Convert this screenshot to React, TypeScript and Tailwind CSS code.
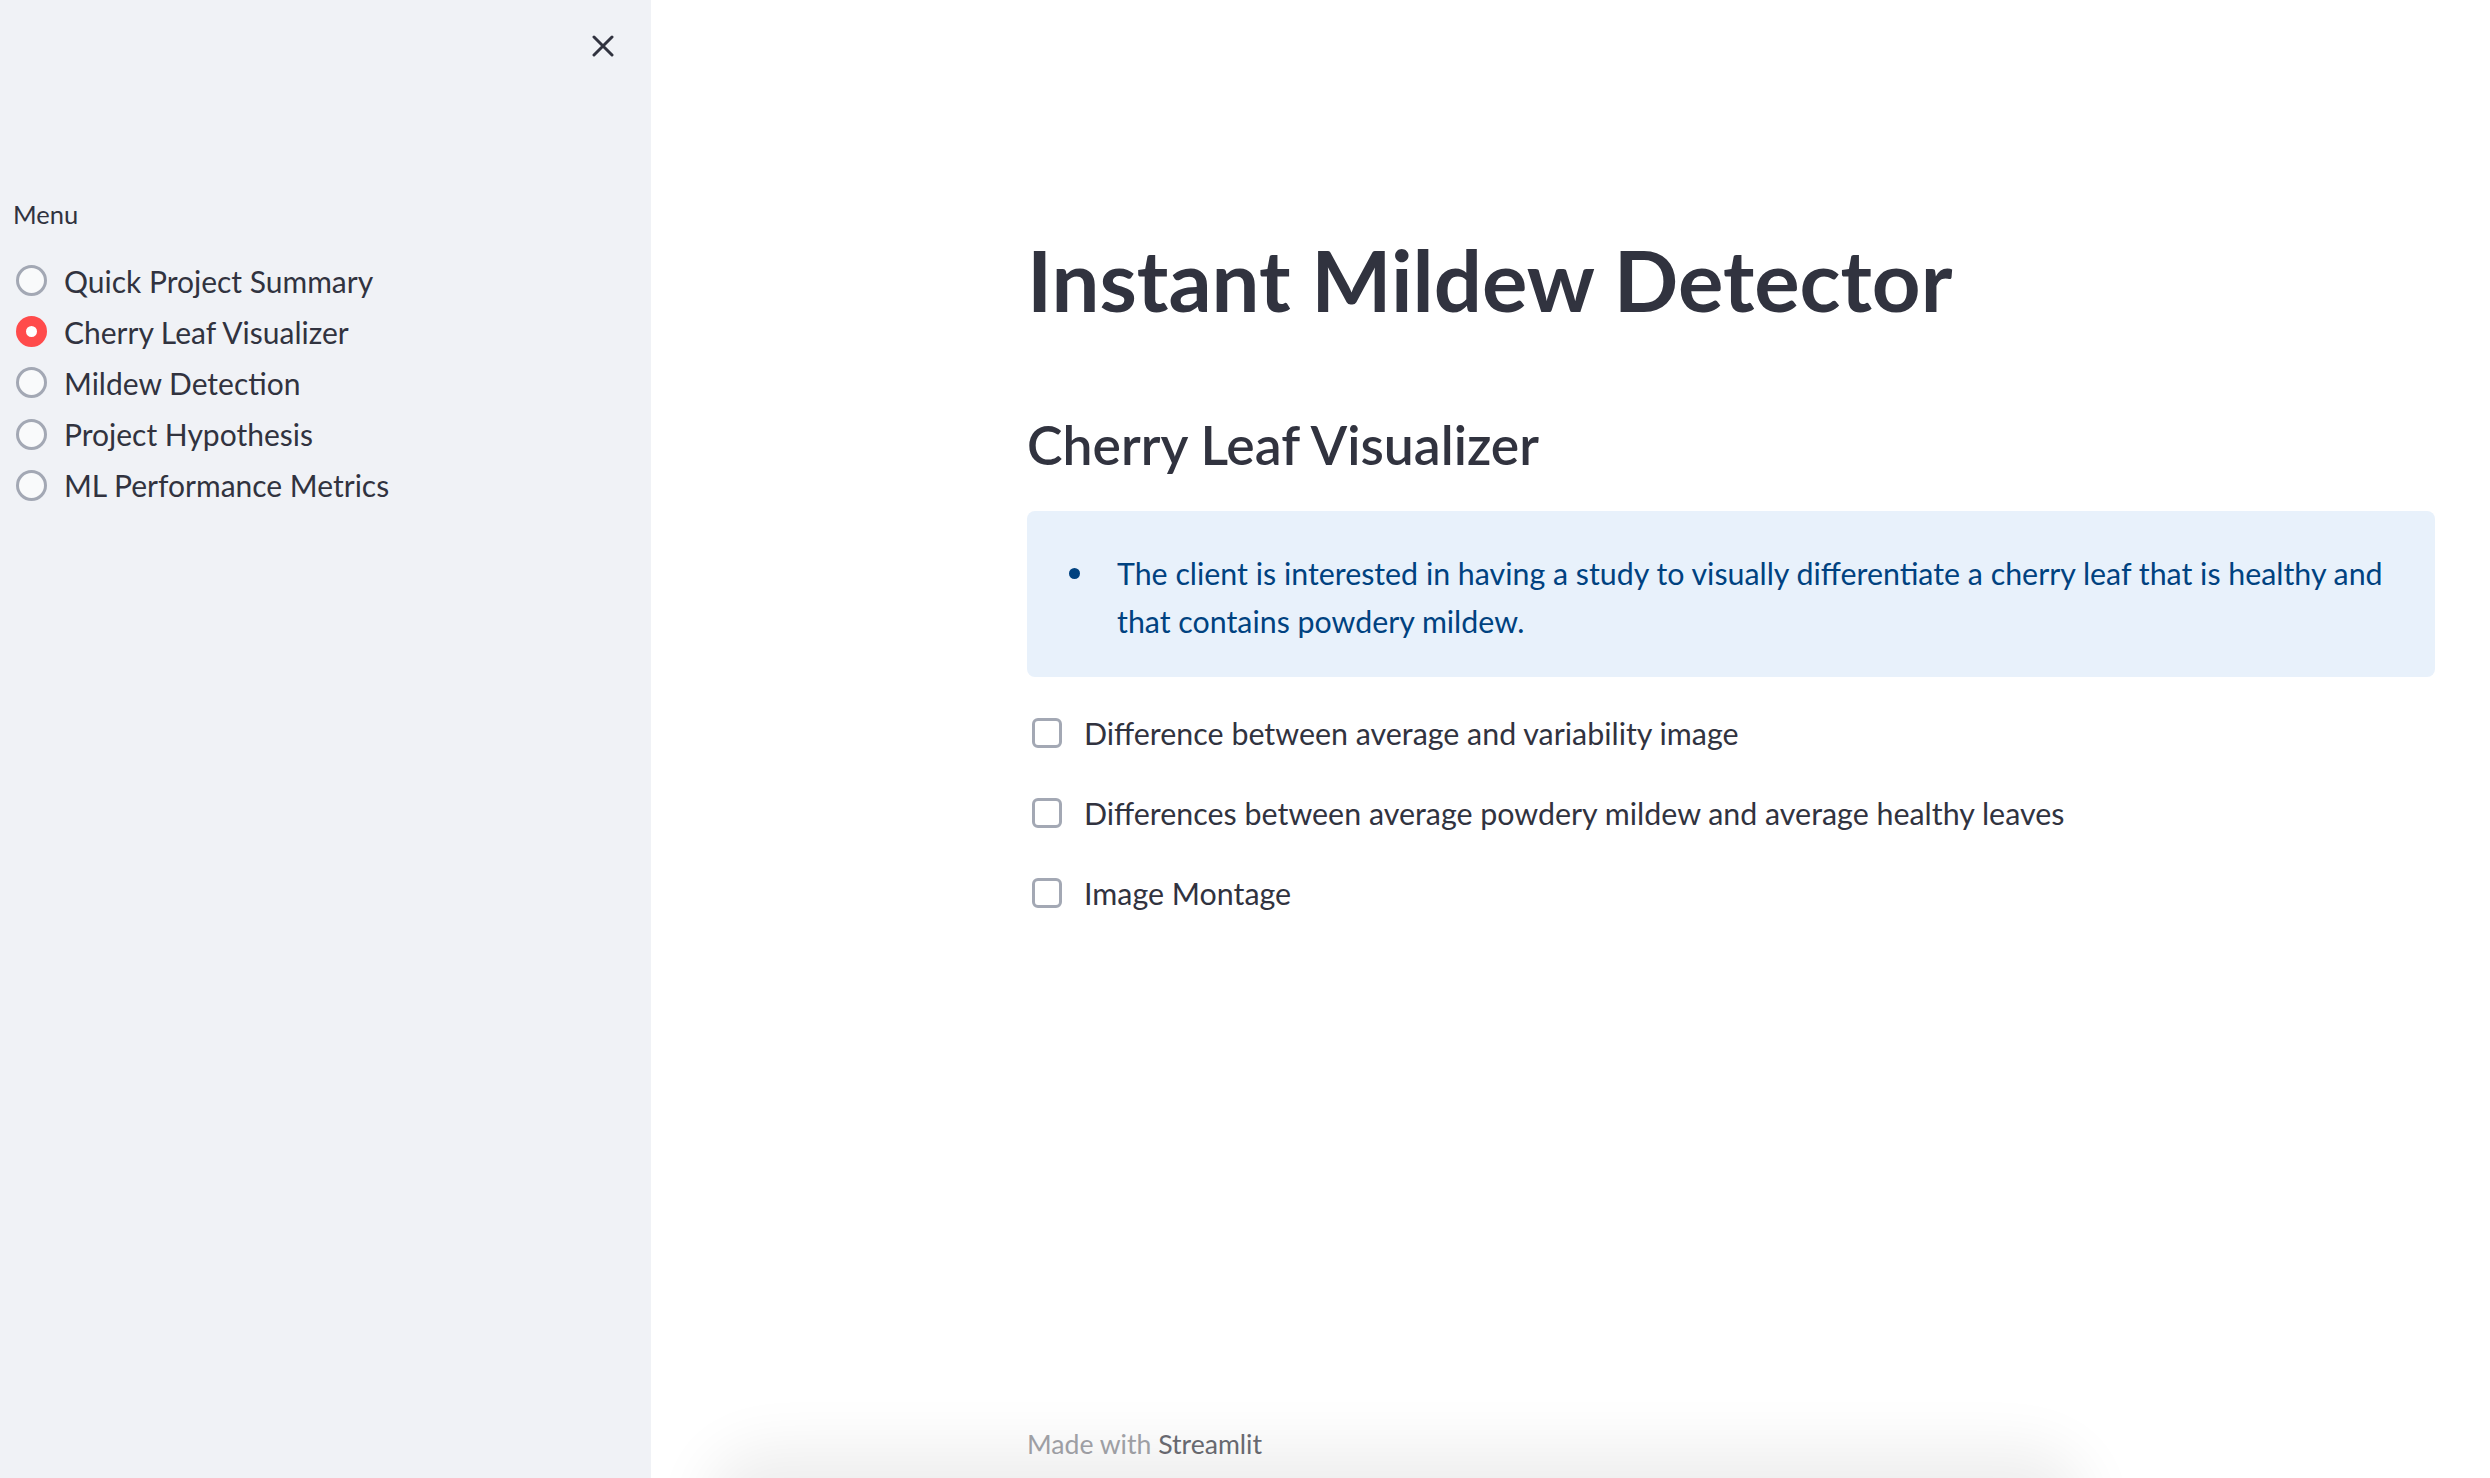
import React from "react";

const items = [
  "Quick Project Summary",
  "Cherry Leaf Visualizer",
  "Mildew Detection",
  "Project Hypothesis",
  "ML Performance Metrics",
];

const checks = [
  "Difference between average and variability image",
  "Differences between average powdery mildew and average healthy leaves",
  "Image Montage",
];

export default function App() {
  return (
    <div
      className="flex h-screen w-full overflow-hidden bg-white text-[#31333f]"
      style={{ fontFamily: "Lato, 'Noto Sans', sans-serif" }}
    >
      {/* Sidebar */}
      <aside className="flex w-[651px] shrink-0 flex-col bg-[#f0f2f6]">
        <div className="flex h-[192px] justify-end pr-[37px] pt-[35px]">
          <svg width="22" height="22" viewBox="0 0 22 22" className="block">
            <path d="M2 2L20 20M20 2L2 20" stroke="#31333f" strokeWidth="3" strokeLinecap="round" />
          </svg>
        </div>
        <div className="pl-[13px] text-[25.5px] leading-[44px]">Menu</div>
        <div className="mt-[19px] flex flex-col pl-[16px]">
          {items.map((it, i) => (
            <div key={it} className="flex h-[51.2px] items-center gap-[17px]">
              {i === 1 ? (
                <span className="box-border block h-[31px] w-[31px] rounded-full border-[10px] border-[#ff4b4b] bg-white" />
              ) : (
                <span className="box-border block h-[31px] w-[31px] rounded-full border-[3.5px] border-[#a3a8b4] bg-[#f9fafb]" />
              )}
              <span className="text-[30px] leading-[44px]">{it}</span>
            </div>
          ))}
        </div>
      </aside>

      {/* Main */}
      <main className="relative flex flex-1 flex-col pl-[376px]">
        <div className="flex w-[1408px] flex-col pt-[226px]">
          <h1 className="h-[106px] text-[85px] font-bold leading-[106px] text-[#31333f]">
            Instant Mildew Detector
          </h1>
          <h2 className="mt-[79px] h-[67px] text-[53.5px] font-semibold leading-[67px] text-[#31333f]">
            Cherry Leaf Visualizer
          </h2>
          <div className="mt-[33px] box-border h-[166px] rounded-[8px] bg-[#e8f1fb] pt-[38px] pb-[32px] pl-[42px] pr-[30px] text-[#004280]">
            <div className="flex gap-[37px]">
              <span className="mt-[19px] block h-[11px] w-[11px] shrink-0 rounded-full bg-[#004280]" />
              <p className="text-[30.35px] leading-[48px]">
                The client is interested in having a study to visually differentiate a cherry leaf that is healthy and that contains powdery mildew.
              </p>
            </div>
          </div>
          <div className="mt-[16px] flex flex-col">
            {checks.map((c) => (
              <div key={c} className="flex h-[80px] items-center gap-[22px] pl-[5px]">
                <span className="box-border block h-[30px] w-[30px] rounded-[6px] border-[3px] border-[#a3a8b4] bg-white" />
                <span className="text-[30.4px] leading-[44px]">{c}</span>
              </div>
            ))}
          </div>
        </div>
        <footer className="relative mt-auto w-[1408px] pb-[12.5px]">
          <div className="text-[26.6px] leading-[44px] text-[#a3a4a9]">
            Made with <span className="text-[#6b6c73]">Streamlit</span>
          </div>
        </footer>
        <div className="pointer-events-none absolute bottom-[-60px] left-[85px] h-[60px] w-[1320px] rounded-[40px] bg-[#e4e4e4] shadow-[0_0_60px_30px_rgba(0,0,0,0.07)]" />
      </main>
    </div>
  );
}
